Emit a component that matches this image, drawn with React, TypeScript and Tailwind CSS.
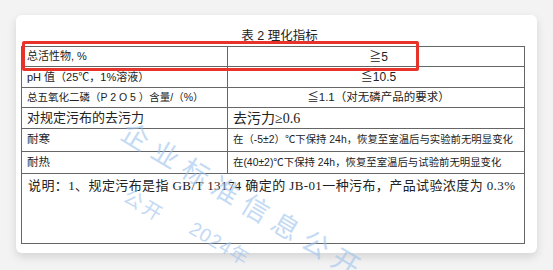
import React from "react";

const sans = "font-['Liberation_Sans','Noto_Sans_CJK_SC',sans-serif]";
const serif = "font-['Liberation_Serif','Noto_Sans_CJK_SC',serif]";

const rows: { label: string; labelClass: string; value: string; valueClass: string; h: string }[] = [
  { label: "总活性物, %", labelClass: "text-[11px]", value: "≧5", valueClass: "justify-center text-[12px]", h: "h-[20px]" },
  { label: "pH 值（25℃，1%溶液）", labelClass: "text-[11px]", value: "≦10.5", valueClass: "justify-center text-[12px]", h: "h-[21px]" },
  { label: "总五氧化二磷（P 2 O 5 ）含量/（%）", labelClass: "text-[10.5px]", value: "≦1.1（对无磷产品的要求）", valueClass: "justify-center text-[11.5px]", h: "h-[20px]" },
  { label: "对规定污布的去污力", labelClass: "text-[13px]", value: "去污力≥0.6", valueClass: `${serif} text-[14px]`, h: "h-[21px]" },
  { label: "耐寒", labelClass: "text-[11.5px]", value: "在（-5±2）℃下保持 24h，恢复至室温后与实验前无明显变化", valueClass: "text-[10.4px]", h: "h-[23px]" },
  { label: "耐热", labelClass: "text-[11.5px]", value: "在(40±2)℃下保持 24h，恢复至室温后与试验前无明显变化", valueClass: "text-[10.4px]", h: "h-[22px]" },
];

export default function App() {
  return (
    <div className={`relative w-[553px] h-[270px] overflow-hidden bg-[#f3f3f3] pt-[15px] pl-[16px] ${sans}`}>
      <div className="relative w-[521px] h-[238px] rounded-md bg-white shadow-[0_4px_10px_rgba(0,0,0,0.13)] pt-[12px] pl-[5px] text-[#222]">
        <div className="h-[19px] text-center text-[12.5px] leading-[19px] pl-[14px] w-[503px]">表 2 理化指标</div>
        <div className="w-[504px] border border-[#666] grid grid-cols-[206px_1fr]">
          {rows.map((r, i) => (
            <React.Fragment key={i}>
              <div className={`${r.h} border-b border-r border-[#666] flex items-center pl-[5px] ${r.labelClass}`}>{r.label}</div>
              <div className={`${r.h} border-b border-[#666] flex items-center pl-[5px] ${r.valueClass}`}>{r.value}</div>
            </React.Fragment>
          ))}
          <div className={`col-span-2 h-[69px] pl-[6px] pt-[2px] text-[13px] tracking-[0.4px] ${serif}`}>
            说明：1、规定污布是指 GB/T 13174 确定的 JB-01一种污布，产品试验浓度为 0.3%
          </div>
        </div>
        <div className="pointer-events-none absolute left-[118px] top-[98px] origin-top-left rotate-[31deg] text-[#9cc2ee] opacity-60 text-[27px] tracking-[8px] whitespace-nowrap">
          企业标准信息公开
        </div>
        <div className="pointer-events-none absolute left-[116px] top-[168px] origin-top-left rotate-[31deg] text-[#9cc2ee] opacity-60 text-[19px] tracking-[3px] whitespace-nowrap">
          公开
        </div>
        <div className="pointer-events-none absolute left-[182px] top-[200px] origin-top-left rotate-[31deg] text-[#9cc2ee] opacity-60 text-[19px] tracking-[1px] whitespace-nowrap">
          2024年
        </div>
      </div>
      <div className="absolute left-[22px] top-[41px] w-[397px] h-[30px] border-[3px] border-[#e8332b] rounded-[2px]" />
    </div>
  );
}
